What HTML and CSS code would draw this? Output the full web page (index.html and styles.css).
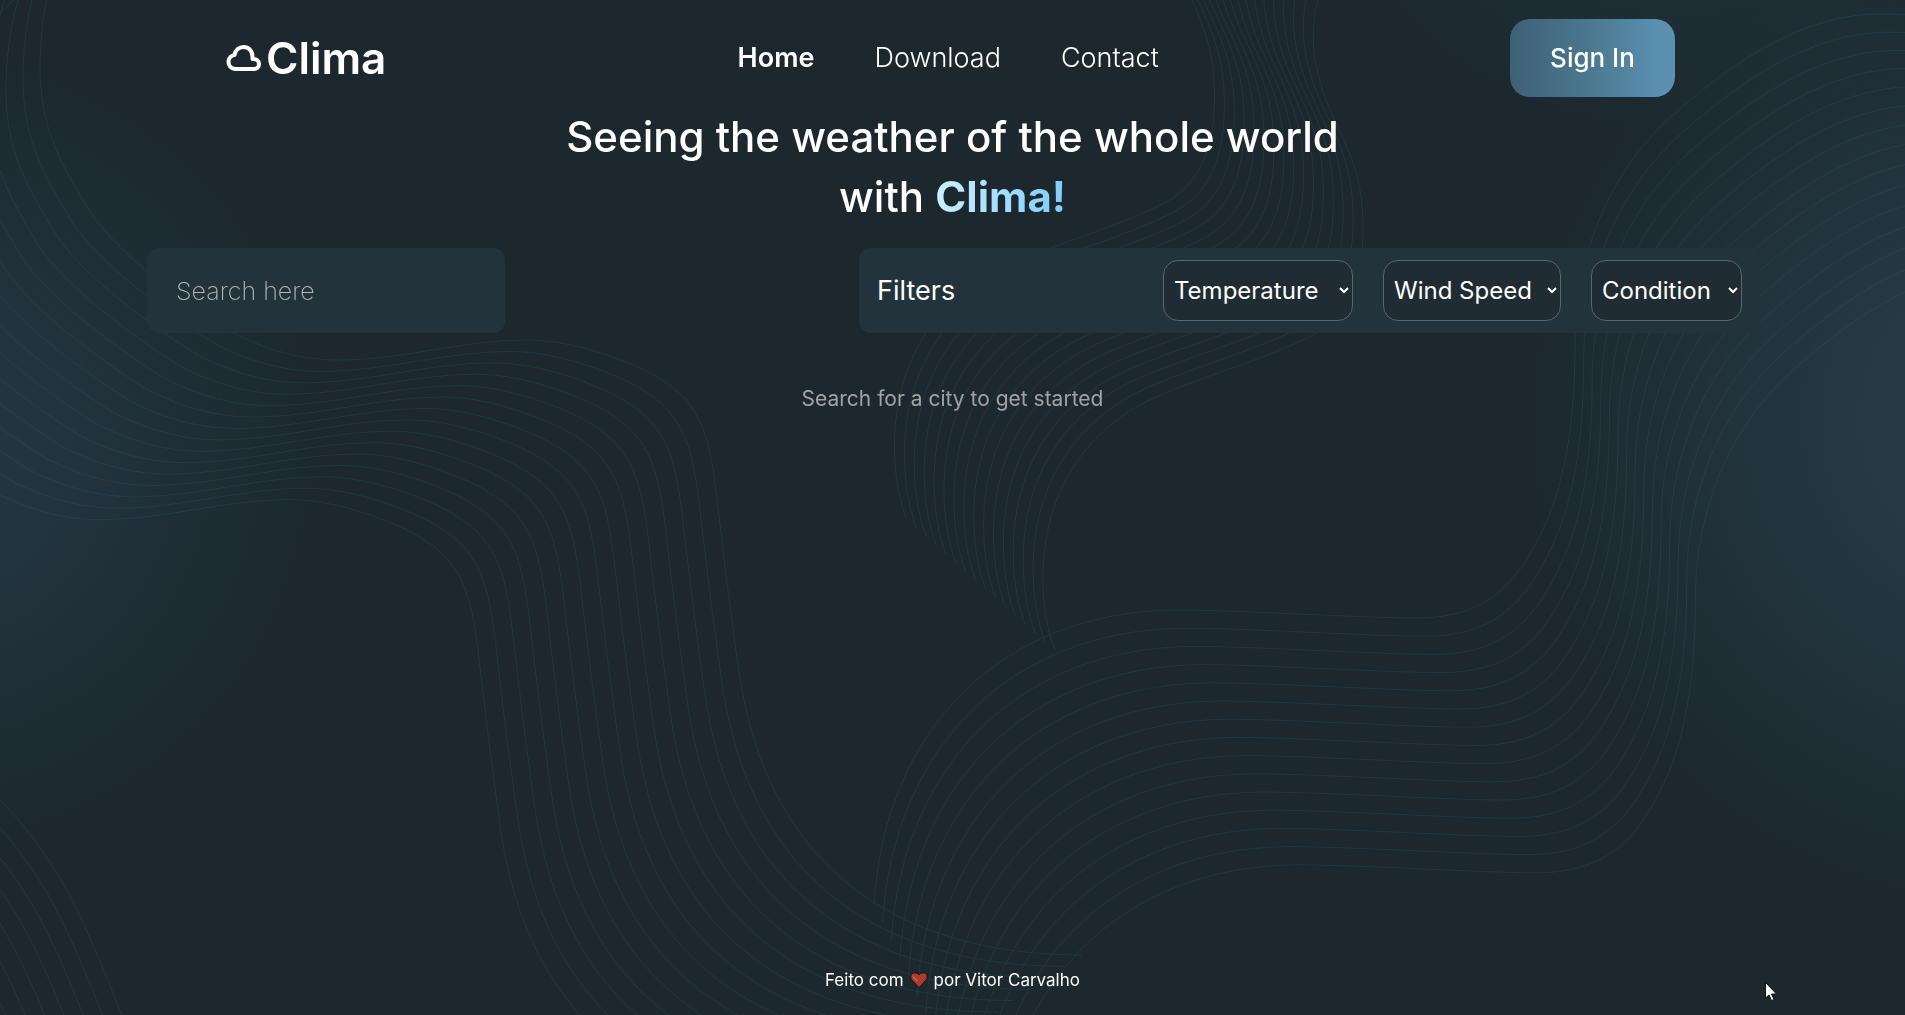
FILE: index.html
```html
<!DOCTYPE html>
<html lang="en">
<head>
  <meta charset="utf-8">
  <meta name="viewport" content="width=device-width, initial-scale=1">
  <title>Clima</title>
  <link rel="stylesheet" href="styles.css">
</head>
<body>
  <svg class="waves" viewBox="0 0 1905 1015" preserveAspectRatio="xMidYMid slice" aria-hidden="true">
    <defs>
      <!-- Each ribbon is one curve, repeated at a constant step -->
      <path id="a1" d="M130,-170 C70,-90 40,-20 40,67 C40,130 62,165 90,212 C115,248 165,290 233,333 C275,354 310,361 347,360 C410,358 465,340 527,340 C560,340 600,350 640,368 C700,396 708,430 716,490 C724,560 729,600 738,665 C765,870 900,955 1082,955"/>
      <g id="a2"><use href="#a1"/><use href="#a1" x="-17" y="11.4"/></g>
      <g id="a4"><use href="#a2"/><use href="#a2" x="-34" y="22.8"/></g>
      <g id="a8"><use href="#a4"/><use href="#a4" x="-68" y="45.6"/></g>

      <path id="b1" d="M1326,-30 C1310,20 1308,50 1326,100 C1345,145 1363,170 1363,228 C1363,300 1335,325 1305,339 C1250,365 1180,383 1140,405 C1070,445 1043,510 1043,578 C1043,605 1047,630 1055,651"/>
      <g id="b2"><use href="#b1"/><use href="#b1" x="-9.9" y="-8.8"/></g>
      <g id="b4"><use href="#b2"/><use href="#b2" x="-19.8" y="-17.6"/></g>
      <g id="b8"><use href="#b4"/><use href="#b4" x="-39.6" y="-35.2"/></g>

      <path id="c1" d="M1960,22 C1930,16 1905,14 1880,14 C1800,14 1730,65 1673,115 C1620,162 1575,240 1575,345 C1575,440 1560,500 1535,545 C1510,592 1478,618 1416,618 C1360,618 1240,610 1175,610 C1000,612 885,730 874,904"/>
      <g id="c2"><use href="#c1"/><use href="#c1" x="8.6" y="18.2"/></g>
      <g id="c4"><use href="#c2"/><use href="#c2" x="17.2" y="36.4"/></g>
      <g id="c8"><use href="#c4"/><use href="#c4" x="34.4" y="72.8"/></g>

      <path id="d1" d="M-20,778 C60,860 75,900 122,1015 L162,1120"/>
      <g id="d2"><use href="#d1"/><use href="#d1" x="-14" y="13"/></g>
      <g id="d4"><use href="#d2"/><use href="#d2" x="-28" y="26"/></g>
    </defs>
    <use href="#a8"/>
    <use href="#a4" x="-136" y="91.2"/>
    <use href="#a2" x="-204" y="136.8"/>
    <use href="#a1" x="-238" y="159.6"/>
    <use href="#b8"/>
    <use href="#b8" x="-79.2" y="-70.4"/>
    <use href="#c8"/>
    <use href="#c4" x="68.8" y="145.6"/>
    <use href="#c2" x="103.2" y="218.4"/>
    <use href="#c1" x="120.4" y="254.8"/>
    <use href="#d4"/>
    <use href="#d4" x="-56" y="52"/>
    <path d="M14,0 L0,13"/>
  </svg>

  <header class="header">
    <a class="logo" href="#">
      <svg class="logo-icon" viewBox="0 0 36 28" aria-hidden="true">
        <path d="M9,25 C5,25 2.500,21.500 2.500,18 C2.500,14 5.500,11.500 8.500,11 C9.500,6 13,3 17.500,3 C22.500,3 26.500,7 26.500,12.500 V15 C30,14.500 33,17 33,20 C33,23 31,25 28,25 Z"/>
      </svg>
      <span>Clima</span>
    </a>
    <nav class="nav" aria-label="Main">
      <a class="nav-link nav-link-active" href="#">Home</a>
      <a class="nav-link" href="#">Download</a>
      <a class="nav-link" href="#">Contact</a>
    </nav>
    <button class="sign-in" type="button">Sign In</button>
  </header>

  <main class="main">
    <h1 class="title">Seeing the weather of the whole world<br>with <strong class="brand">Clima!</strong></h1>
    <form class="tools">
      <input class="search" type="search" placeholder="Search here" aria-label="Search here">
      <div class="filters">
        <span class="filters-label">Filters</span>
        <div class="selects">
          <select class="select select-temperature" aria-label="Temperature"><option>Temperature</option></select>
          <select class="select select-wind" aria-label="Wind Speed"><option>Wind Speed</option></select>
          <select class="select select-condition" aria-label="Condition"><option>Condition</option></select>
        </div>
      </div>
    </form>
    <p class="message">Search for a city to get started</p>
  </main>

  <footer class="footer">
    <span>Feito com</span>
    <svg class="heart" viewBox="0 0 18 16" aria-hidden="true">
      <path fill="#b13a2e" stroke="#17191c" d="M3,1 H7 L9,3 L11,1 H15 L17,3 V7 L9,15.500 L1,7 V3 Z"/>
      <path fill="none" stroke="#b07a35" stroke-width="1.300" d="M3,4.500 L7,9"/>
    </svg>
    <span>por Vitor Carvalho</span>
  </footer>

  <svg class="pointer" viewBox="0 0 12 19" aria-hidden="true">
    <path fill="#fff" stroke="#10161a" d="M0.500,0.500 V16 L4,13 L6.500,18.500 L9,17.500 L6.500,12 H11.500 Z"/>
  </svg>
</body>
</html>
```
FILE: styles.css
```css
* {
  box-sizing: border-box;
}

body {
  display: flex;
  flex-direction: column;
  min-height: 100vh;
  margin: 0;
  color: #fff;
  font-family: Inter, "Open Sans", sans-serif;
  background-color: #1c282e;
  background-image:
    radial-gradient(circle 400px at -80px 450px, #243842, #233640 25%, rgba(28, 40, 46, 0)),
    radial-gradient(circle 490px at calc(100% + 110px) 420px, #263d48, #253a44 30%, rgba(28, 40, 46, 0)),
    radial-gradient(circle 400px at calc(100% - 225px) -260px, #243842, rgba(28, 40, 46, 0));
  background-repeat: no-repeat;
}

.waves {
  position: fixed;
  inset: 0;
  z-index: -1;
  width: 100%;
  height: 100%;
  fill: none;
  stroke: #347390;
  stroke-width: 1;
  opacity: 0.2;
}

.header {
  display: flex;
  align-items: center;
  justify-content: space-between;
  padding: 19px 230px 10px 226px;
}

.logo {
  display: flex;
  align-items: center;
  gap: 4px;
  color: inherit;
  font-size: 44px;
  font-weight: 600;
  line-height: 60px;
  text-decoration: none;
}

.logo-icon {
  width: 36px;
  height: 28px;
  fill: none;
  stroke: #fff;
  stroke-width: 4;
  stroke-linejoin: round;
}

.nav {
  display: flex;
  gap: 60px;
}

.nav-link {
  color: inherit;
  font-size: 27px;
  font-weight: 300;
  line-height: 36px;
  text-decoration: none;
}

.nav-link-active {
  font-weight: 600;
}

.sign-in {
  width: 165px;
  height: 78px;
  border: 0;
  border-radius: 20px;
  color: inherit;
  font: 500 26px/36px Inter, "Open Sans", sans-serif;
  background: linear-gradient(90deg, #3e6075, #4b7990 50%, #5b90b1 90%);
}

.main {
  flex: 1;
}

.title {
  margin: 0 0 21px;
  font-size: 42px;
  font-weight: 500;
  line-height: 60px;
  text-align: center;
}

.brand {
  font-weight: 700;
  color: transparent;
  background: linear-gradient(90deg, #c9f0ff, #80cbff);
  background-clip: text;
}

.tools {
  display: flex;
  justify-content: space-between;
  gap: 30px;
  padding: 0 146px 0 147px;
}

.search {
  flex: 0 1 358px;
  min-width: 0;
  height: 85px;
  padding: 0 29px;
  border: 0;
  border-radius: 12px;
  color: #fff;
  font: 200 25px/36px Inter, "Open Sans", sans-serif;
  background: #23333c;
}

.search::placeholder {
  color: #b4b4b4;
}

.filters {
  display: flex;
  flex: 0 1 900px;
  align-items: center;
  justify-content: space-between;
  min-height: 85px;
  padding: 0 17px 0 18px;
  border-radius: 12px;
  background: #23333c;
}

.filters-label {
  font-size: 27px;
}

.selects {
  display: flex;
  gap: 30px;
}

.select {
  height: 61px;
  padding: 0 7px 0 6px;
  border: 1px solid #5b666e;
  border-radius: 15px;
  color: #fff;
  font: 400 24px/36px Inter, "Open Sans", sans-serif;
  background-color: #1f2c33;
}

.select-temperature {
  width: 190px;
}

.select-wind {
  width: 178px;
}

.select-condition {
  width: 151px;
}

.message {
  margin: 51px 0 0;
  color: #a0a2a3;
  font-size: 21px;
  line-height: 30px;
  text-align: center;
}

.footer {
  display: flex;
  align-items: center;
  justify-content: center;
  gap: 6px;
  padding-bottom: 23px;
  font-size: 17px;
  line-height: 24px;
}

.heart {
  width: 18px;
  height: 16px;
}

.pointer {
  position: absolute;
  right: 128px;
  bottom: 14px;
  width: 12px;
  height: 19px;
}
```
